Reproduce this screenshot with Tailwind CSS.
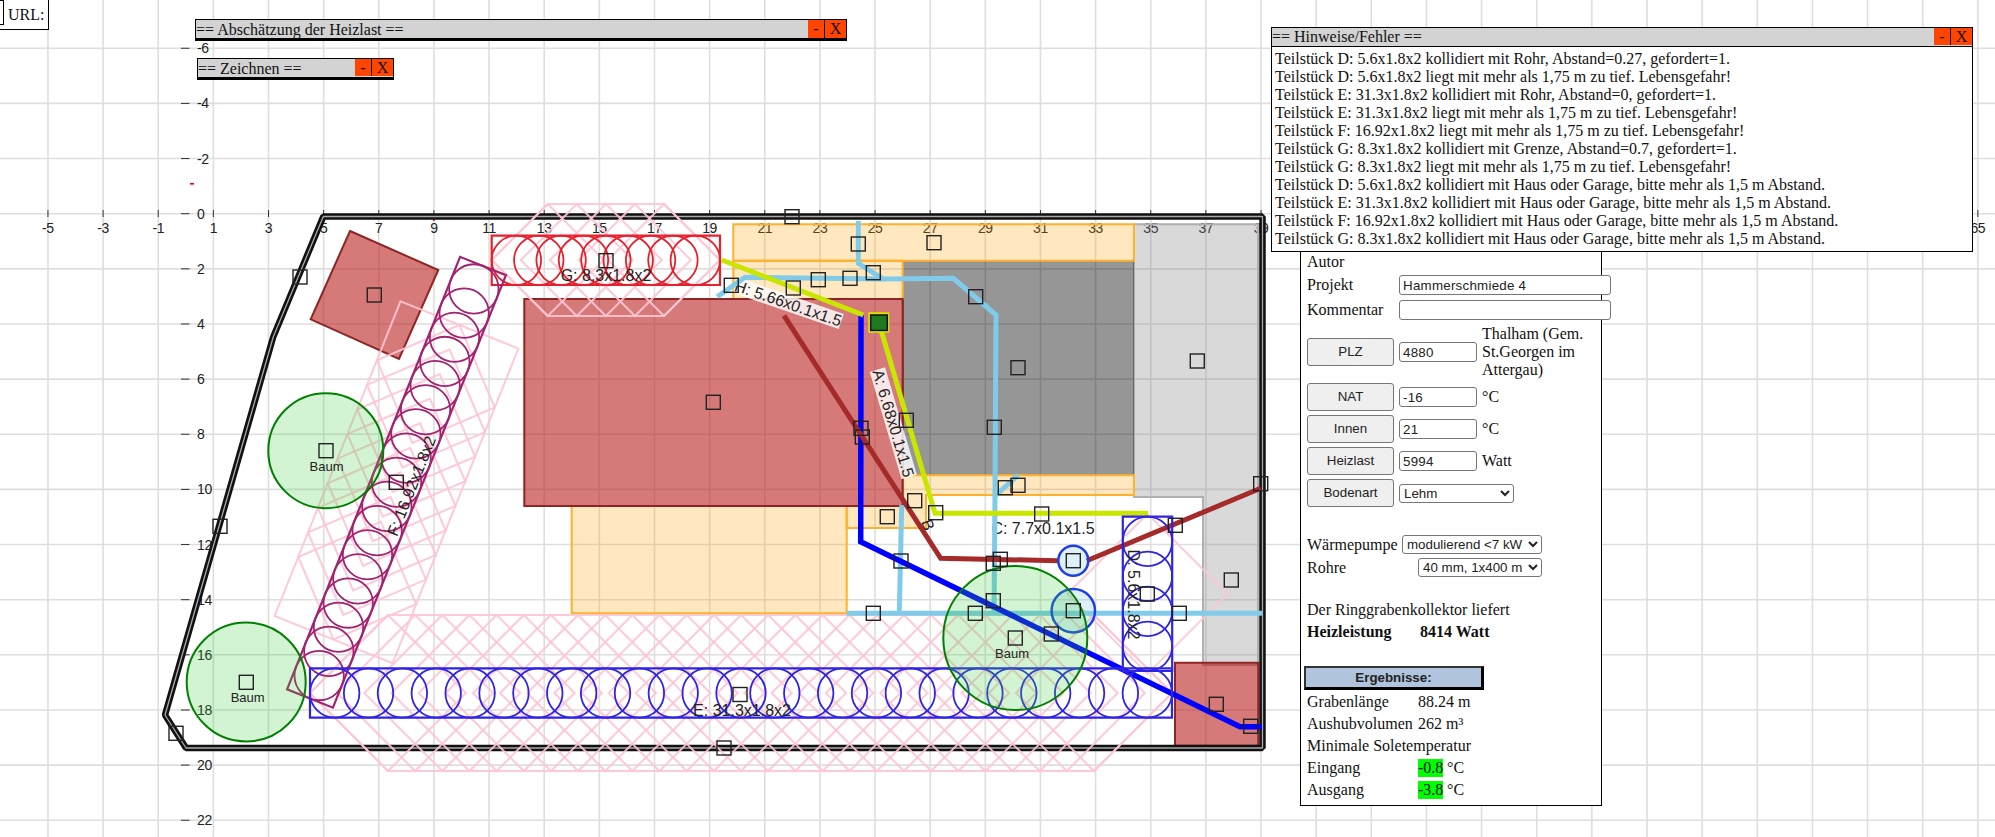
<!DOCTYPE html>
<html lang="de">
<head>
    <meta charset="UTF-8">
    <title>Ringgrabenkollektor</title>
    <script src="https://cdn.jsdelivr.net/npm/@tailwindcss/browser@4"></script>
</head>
<body class="bg-white">
<div class="relative w-[1995px] h-[837px] overflow-hidden bg-white font-['Liberation_Serif',serif] text-[16px] leading-[18px] text-[#111]">

    <!-- Plan -->
    <svg id="plan" class="absolute left-0 top-0" width="1995" height="837" font-family="'Liberation Sans', Arial, sans-serif"></svg>

    <!-- URL box -->
    <div class="absolute left-0 top-[-1px] w-[49px] h-[31px] bg-white border border-black border-l-0 flex items-start">
        <div class="w-[4px] h-[25px] border border-black border-l-0 shrink-0"></div>
        <span class="ml-[4px] mt-[6px]">URL:</span>
    </div>

    <!-- Heizlast window -->
    <div class="absolute left-[195px] top-[19px] w-[652px] h-[22px] bg-[#d3d3d3] border border-black border-b-[3px] flex">
        <span class="flex-1 whitespace-nowrap leading-[19px]">== Abschätzung der Heizlast ==</span>
        <span class="w-[17px] h-[18px] bg-[#ff4500] text-center border-r border-black">-</span>
        <span class="w-[21px] h-[18px] bg-[#ff4500] text-center">X</span>
    </div>

    <!-- Zeichnen window -->
    <div class="absolute left-[197px] top-[58px] w-[197px] h-[22px] bg-[#d3d3d3] border border-black border-b-[3px] flex">
        <span class="flex-1 whitespace-nowrap leading-[19px]">== Zeichnen ==</span>
        <span class="w-[17px] h-[17px] bg-[#ff4500] text-center border-r border-black">-</span>
        <span class="w-[21px] h-[17px] bg-[#ff4500] text-center">X</span>
    </div>

    <!-- Main panel -->
    <div class="absolute left-[1300px] top-[240px] w-[302px] h-[566px] bg-white border border-black pl-[6px] pt-[12px]">
        <div class="h-[18px]">Autor</div>
        <div class="flex items-center h-[20px] mt-[4px]">
            <span class="w-[92px] shrink-0">Projekt</span>
            <input value="Hammerschmiede 4" class="w-[212px] h-[20px] shrink-0 bg-white border border-[#767676] rounded-[3px] px-[3px] font-['Liberation_Sans',sans-serif] text-[13.33px] tracking-[0.25px] text-[#222]">
        </div>
        <div class="flex items-center h-[20px] mt-[5px]">
            <span class="w-[92px] shrink-0">Kommentar</span>
            <input value="" class="w-[212px] h-[20px] shrink-0 bg-white border border-[#767676] rounded-[3px] px-[3px]">
        </div>
        <div class="flex items-center h-[54px] mt-[5px]">
            <button class="w-[87px] h-[28px] mr-[5px] shrink-0 bg-[#efefef] border border-[#767676] rounded-[3px] font-['Liberation_Sans',sans-serif] text-[13.33px] text-[#222]">PLZ</button>
            <input value="4880" class="w-[78px] h-[20px] shrink-0 bg-white border border-[#767676] rounded-[3px] px-[3px] font-['Liberation_Sans',sans-serif] text-[13.33px] tracking-[0.25px] text-[#222]">
            <span class="ml-[5px] w-[110px]">Thalham (Gem. St.Georgen im Attergau)</span>
        </div>
        <div class="flex items-center h-[28px] mt-[4px]">
            <button class="w-[87px] h-[28px] mr-[5px] shrink-0 bg-[#efefef] border border-[#767676] rounded-[3px] font-['Liberation_Sans',sans-serif] text-[13.33px] text-[#222]">NAT</button>
            <input value="-16" class="w-[78px] h-[20px] shrink-0 bg-white border border-[#767676] rounded-[3px] px-[3px] font-['Liberation_Sans',sans-serif] text-[13.33px] tracking-[0.25px] text-[#222]">
            <span class="ml-[5px]">°C</span>
        </div>
        <div class="flex items-center h-[28px] mt-[4px]">
            <button class="w-[87px] h-[28px] mr-[5px] shrink-0 bg-[#efefef] border border-[#767676] rounded-[3px] font-['Liberation_Sans',sans-serif] text-[13.33px] text-[#222]">Innen</button>
            <input value="21" class="w-[78px] h-[20px] shrink-0 bg-white border border-[#767676] rounded-[3px] px-[3px] font-['Liberation_Sans',sans-serif] text-[13.33px] tracking-[0.25px] text-[#222]">
            <span class="ml-[5px]">°C</span>
        </div>
        <div class="flex items-center h-[28px] mt-[4px]">
            <button class="w-[87px] h-[28px] mr-[5px] shrink-0 bg-[#efefef] border border-[#767676] rounded-[3px] font-['Liberation_Sans',sans-serif] text-[13.33px] text-[#222]">Heizlast</button>
            <input value="5994" class="w-[78px] h-[20px] shrink-0 bg-white border border-[#767676] rounded-[3px] px-[3px] font-['Liberation_Sans',sans-serif] text-[13.33px] tracking-[0.25px] text-[#222]">
            <span class="ml-[5px]">Watt</span>
        </div>
        <div class="flex items-center h-[28px] mt-[4px]">
            <button class="w-[87px] h-[28px] mr-[5px] shrink-0 bg-[#efefef] border border-[#767676] rounded-[3px] font-['Liberation_Sans',sans-serif] text-[13.33px] text-[#222]">Bodenart</button>
            <select class="w-[115px] h-[19px] shrink-0 bg-white border border-[#767676] rounded-[3px] font-['Liberation_Sans',sans-serif] text-[13.33px] text-[#222]"><option>Lehm</option></select>
        </div>
        <div class="flex items-center h-[19px] mt-[28px]">
            <span class="w-[95px] shrink-0">Wärmepumpe</span>
            <select class="w-[140px] h-[19px] shrink-0 bg-white border border-[#767676] rounded-[3px] font-['Liberation_Sans',sans-serif] text-[13.33px] text-[#222]"><option>modulierend &lt;7 kW</option></select>
        </div>
        <div class="flex items-center h-[19px] mt-[4px]">
            <span class="w-[111px] shrink-0">Rohre</span>
            <select class="w-[124px] h-[19px] shrink-0 bg-white border border-[#767676] rounded-[3px] font-['Liberation_Sans',sans-serif] text-[13.33px] text-[#222]"><option>40 mm, 1x400 m</option></select>
        </div>
        <div class="h-[18px] mt-[24px]">Der Ringgrabenkollektor liefert</div>
        <div class="flex h-[18px] mt-[4px] font-bold">
            <span class="w-[113px] shrink-0">Heizleistung</span>
            <span>8414 Watt</span>
        </div>
        <div class="w-[180px] h-[24px] mt-[25px] ml-[-3px] bg-[#b0c4de] border-2 border-[#333] border-r-[3px] border-b-[3px] border-r-black border-b-black flex items-center justify-center font-['Liberation_Sans',sans-serif] text-[13.33px] font-bold text-[#222]">Ergebnisse:</div>
        <div class="flex h-[18px] mt-[3px]">
            <span class="w-[111px] shrink-0">Grabenlänge</span><span>88.24 m</span>
        </div>
        <div class="flex h-[18px] mt-[4px]">
            <span class="w-[111px] shrink-0">Aushubvolumen</span><span>262 m³</span>
        </div>
        <div class="h-[18px] mt-[4px]">Minimale Soletemperatur</div>
        <div class="flex h-[18px] mt-[4px]">
            <span class="w-[111px] shrink-0">Eingang</span><span class="bg-[#00ff00] w-[25px]">-0.8</span><span class="ml-[4px]">°C</span>
        </div>
        <div class="flex h-[18px] mt-[4px]">
            <span class="w-[111px] shrink-0">Ausgang</span><span class="bg-[#00ff00] w-[25px]">-3.8</span><span class="ml-[4px]">°C</span>
        </div>
    </div>

    <!-- Hinweise window -->
    <div class="absolute left-[1271px] top-[27px] w-[702px] h-[225px] bg-white border border-black">
        <div class="flex h-[19px] bg-[#d3d3d3] border-b border-black">
            <span class="flex-1 leading-[18px]">== Hinweise/Fehler ==</span>
            <span class="w-[17px] h-[17px] bg-[#ff4500] text-center border-r border-black">-</span>
            <span class="w-[21px] h-[17px] bg-[#ff4500] text-center">X</span>
        </div>
        <div class="pl-[3px] pt-[3px] whitespace-nowrap">
            <div>Teilstück D: 5.6x1.8x2 kollidiert mit Rohr, Abstand=0.27, gefordert=1.</div>
            <div>Teilstück D: 5.6x1.8x2 liegt mit mehr als 1,75 m zu tief. Lebensgefahr!</div>
            <div>Teilstück E: 31.3x1.8x2 kollidiert mit Rohr, Abstand=0, gefordert=1.</div>
            <div>Teilstück E: 31.3x1.8x2 liegt mit mehr als 1,75 m zu tief. Lebensgefahr!</div>
            <div>Teilstück F: 16.92x1.8x2 liegt mit mehr als 1,75 m zu tief. Lebensgefahr!</div>
            <div>Teilstück G: 8.3x1.8x2 kollidiert mit Grenze, Abstand=0.7, gefordert=1.</div>
            <div>Teilstück G: 8.3x1.8x2 liegt mit mehr als 1,75 m zu tief. Lebensgefahr!</div>
            <div>Teilstück D: 5.6x1.8x2 kollidiert mit Haus oder Garage, bitte mehr als 1,5 m Abstand.</div>
            <div>Teilstück E: 31.3x1.8x2 kollidiert mit Haus oder Garage, bitte mehr als 1,5 m Abstand.</div>
            <div>Teilstück F: 16.92x1.8x2 kollidiert mit Haus oder Garage, bitte mehr als 1,5 m Abstand.</div>
            <div>Teilstück G: 8.3x1.8x2 kollidiert mit Haus oder Garage, bitte mehr als 1,5 m Abstand.</div>
        </div>
    </div>
</div>

<script>
    // plan geometry in screen pixels, one metre = 27.57 px
    const M = 27.57, X0 = 185.8, Y0 = 213.7;
    let out = '';

    const poly = (pts, attrs) => { out += `<polygon points="${pts.map(p => p.join(',')).join(' ')}" ${attrs}/>`; };
    const line = (pts, attrs) => { out += `<polyline fill="none" points="${pts.map(p => p.join(',')).join(' ')}" ${attrs}/>`; };
    const circle = (x, y, r, attrs) => { out += `<circle cx="${x}" cy="${y}" r="${r}" ${attrs}/>`; };
    const text = (x, y, s, attrs = '') => { out += `<text x="${x}" y="${y}" dominant-baseline="central" ${attrs}>${s}</text>`; };
    const label = (x, y, rot, s, bgW) => {
        out += `<g transform="translate(${x} ${y}) rotate(${rot})">`;
        if (bgW) out += `<rect x="${-bgW / 2}" y="-8" width="${bgW}" height="16" fill="#fff" fill-opacity="0.82"/>`;
        out += `<text text-anchor="middle" dominant-baseline="central" font-size="16" fill="#222">${s}</text></g>`;
    };

    // grid
    for (let u = -5; u <= 65; u += 2) {
        const x = X0 + u * M;
        out += `<line x1="${x}" x2="${x}" y1="0" y2="837" stroke="#dedede" stroke-width="1.6"/>`;
    }
    for (let v = -6; v <= 22; v += 2) {
        const y = Y0 + v * M;
        out += `<line x1="0" x2="1995" y1="${y}" y2="${y}" stroke="#dedede" stroke-width="1.6"/>`;
    }
    const axisFont = 'font-size="14" letter-spacing="-0.4" fill="#222"';
    for (let u = -5; u <= 65; u += 2) {
        const x = X0 + u * M;
        out += `<line x1="${x}" x2="${x}" y1="210" y2="217" stroke="#333"/>`;
        // 41..63 lie behind the Hinweise window
        if (u < 41 || u > 63) text(x, 228, u, `text-anchor="middle" ${axisFont}`);
    }
    for (let v = -6; v <= 22; v += 2) {
        const y = Y0 + v * M;
        out += `<line x1="181" x2="189.5" y1="${y}" y2="${y}" stroke="#333"/>`;
        text(197, y, v, axisFont);
    }
    out += '<rect x="190" y="183" width="4" height="1.6" fill="#f00"/><rect x="433" y="218" width="1.6" height="3" fill="#f00"/>';

    // areas
    const gray = 'fill="#808080" fill-opacity="0.3" stroke="#b0b0b0" stroke-width="2"';
    poly([[1134, 224.3], [1258, 224.3], [1258, 665], [1203, 665], [1203, 497], [1134, 497]], gray);
    poly([[902.7, 260.7], [1134, 260.7], [1134, 475.3], [902.7, 475.3]], 'fill="#000" fill-opacity="0.41"');
    out += '<line x1="902.7" x2="902.7" y1="299" y2="475" stroke="#222" stroke-width="1.5"/>';
    const orange = 'fill="#ffa500" fill-opacity="0.25" stroke="#ffb02e" stroke-width="2"';
    poly([[733.3, 224.3], [1134, 224.3], [1134, 260.7], [733.3, 260.7]], orange);
    poly([[733.3, 260.7], [902.7, 260.7], [902.7, 299], [733.3, 299]], orange);
    poly([[846.7, 506], [902.7, 506], [902.7, 475.3], [1134, 475.3], [1134, 495], [926, 495], [926, 528], [846.7, 528]], orange);
    poly([[571.7, 506], [846.7, 506], [846.7, 613.3], [571.7, 613.3]], orange);

    // houses
    const house = 'fill="#b92020" fill-opacity="0.6" stroke="#8f2424" stroke-width="2"';
    poly([[524.3, 299], [902.7, 299], [902.7, 506], [524.3, 506]], house);
    poly([[350, 231], [438.3, 270], [399, 359], [310.7, 319.3]], house);
    poly([[1175, 662.7], [1258.3, 662.7], [1258.3, 745.7], [1175, 745.7]], house);

    // boundary, black with a lighter core
    const border = [[323.3, 216.5], [1262.5, 216.5], [1262.5, 748], [186, 748], [165, 715], [273.3, 336.7]];
    poly(border, 'fill="none" stroke="#111" stroke-width="6.5" stroke-linejoin="bevel"');
    poly(border, 'fill="none" stroke="#aaa" stroke-width="1.3" stroke-linejoin="bevel"');

    // pink safety hatch of a trench: one diamond per metre plus the outline
    function hatch(ax, ay, bx, by, h, capped) {
        const L = Math.hypot(bx - ax, by - ay), ux = (bx - ax) / L, uy = (by - ay) / L, nx = -uy, ny = ux;
        const at = (s, t) => [ax + ux * s + nx * t, ay + uy * s + ny * t];
        const st = 'fill="none" stroke="#ffc4d3" stroke-opacity="0.9" stroke-width="2"';
        const start = capped ? 2 * h : h;
        const span = L - 2 * start;
        const n = Math.max(Math.round(span / M), 0);
        for (let k = 0; k <= n; k++) {
            const c = n ? start + k * span / n : L / 2;
            poly([at(c - h, 0), at(c, h), at(c + h, 0), at(c, -h)], st);
        }
        if (capped) poly([at(h, h), at(L - h, h), at(L - h, -h), at(h, -h)], st);
        else if (n) poly([at(0, 0), at(h, h), at(L - h, h), at(L, 0), at(L - h, -h), at(h, -h)], st);
    }
    hatch(491.7, 260, 720, 260, 56);
    hatch(483, 266, 310, 698.5, 63.5, true);
    hatch(310, 693, 1172, 693, 78);
    hatch(1147.5, 516.7, 1147.5, 671, 80);

    // labels of the pipes sit under the pipes
    label(788.3, 303.3, 19, 'H: 5.66x0.1x1.5', 112);
    label(893.3, 423.3, 73.5, 'A: 6.68x0.1x1.5', 112);
    label(1043, 528, 0, 'C: 7.7x0.1x1.5');
    label(928, 525, 70, 'B');

    // pipes
    const sky = 'stroke="#7fcbe9" stroke-width="5"';
    line([[846.7, 613.3], [1262, 613.3]], sky);
    line([[899.3, 613.3], [901.7, 505]], sky);
    line([[994, 613], [995, 493]], sky);
    line([[994, 497], [1018, 475]], sky);
    line([[995, 493], [996, 315], [953.3, 278.3], [883.3, 279], [858.3, 263.3], [858.3, 221]], sky);
    line([[883.3, 279], [745, 277.3], [717.3, 296.7]], sky);
    line([[861, 315], [860.7, 541.7], [1240, 726.7], [1262, 726.7]], 'stroke="#0000ff" stroke-width="5.5"');
    const brown = 'stroke="#a52a2a" stroke-width="5"';
    line([[784, 315.7], [940.7, 558.3], [1058.3, 560.7]], brown);
    line([[1086.7, 560.7], [1260.7, 488.3]], brown);
    const lime = 'stroke="#c8e600" stroke-width="5"';
    line([[721.7, 260], [863.3, 315]], lime);
    line([[879, 323], [935, 513.3], [1148, 513.3]], lime);

    // trenches
    function trench(ax, ay, bx, by, n, col) {
        const L = Math.hypot(bx - ax, by - ay), ux = (bx - ax) / L, uy = (by - ay) / L, nx = -uy, ny = ux, w = 24.7;
        poly([[ax + nx * w, ay + ny * w], [bx + nx * w, by + ny * w], [bx - nx * w, by - ny * w], [ax - nx * w, ay - ny * w]], `fill="none" stroke="${col}" stroke-width="2.2"`);
        for (let k = 0; k < n; k++) {
            const s = w + k * (L - 2 * w) / (n - 1);
            circle(ax + ux * s, ay + uy * s, w, `fill="none" stroke="${col}" stroke-width="1.8"`);
        }
    }
    trench(491.7, 260.3, 720, 260.3, 9, '#e6202c');
    trench(483, 266, 310, 698.5, 17, '#a3226e');
    trench(1147.5, 516.7, 1147.5, 671, 4, '#2f24e6');
    trench(310, 693, 1172, 693, 25, '#2f24e6');

    // wells
    circle(1073.3, 560.7, 15, 'fill="#87ceeb" fill-opacity="0.28" stroke="#1f3fe0" stroke-width="2.5"');
    circle(1073.3, 610.7, 21.7, 'fill="#87ceeb" fill-opacity="0.28" stroke="#1f3fe0" stroke-width="2.5"');

    // trees
    const tree = 'fill="#32cd32" fill-opacity="0.22" stroke="#008000" stroke-width="2"';
    circle(325.8, 450.7, 57.5, tree);
    circle(246.2, 682, 59.5, tree);
    circle(1015.3, 638, 72, tree);

    // trench labels
    label(606, 275.7, 0, 'G: 8.3x1.8x2');
    label(742, 710, 0, 'E: 31.3x1.8x2');
    label(411.5, 486, -68.2, 'F: 16.92x1.8x2');
    label(1133, 594.5, 90, 'D: 5.6x1.8x2');
    for (const [x, y] of [[326.5, 466.7], [247.7, 697.7], [1012, 653.3]])
        text(x, y, 'Baum', 'text-anchor="middle" font-size="13" fill="#222"');

    // start point of the pipes
    out += '<rect x="868.3" y="312.3" width="21" height="20.4" fill="#d6e600"/><rect x="870.7" y="315" width="16.6" height="15.4" fill="#1f7a1f" stroke="#111" stroke-width="1.5"/>';

    // drag handles
    const handles = [[606, 260.7], [731.3, 285.3], [792, 216.7], [793.3, 288], [818.3, 279.7], [850, 278.3], [858.3, 244], [873.3, 272.7],
        [934, 242.7], [975.7, 296.7], [713.3, 402.3], [861, 428.3], [862.3, 437], [906.3, 420.3], [1018, 367.7], [994.3, 427.3],
        [1005.3, 487.7], [1018, 485.3], [1197.3, 361], [1260.7, 483.7], [914.7, 500.7], [887.3, 516.7], [935.7, 512.7], [1041.7, 514],
        [1175.3, 525.3], [1231.3, 580], [1000.3, 559.3], [993.3, 563.3], [901, 561], [1073.3, 560.7], [1073.3, 610.7], [993.3, 600.7],
        [975.3, 613.3], [873.3, 613.3], [1051.3, 634], [1147.3, 594], [1179.3, 613.3], [1216.3, 704.3], [1250.7, 726.3], [300, 277],
        [374.3, 295], [396.3, 482.3], [220, 526.3], [176, 733.3], [724, 748], [740, 694.5], [326, 450.7], [246.3, 682.3], [1015.3, 638]];
    for (const [x, y] of handles)
        out += `<rect x="${x - 7}" y="${y - 7}" width="14" height="14" fill="none" stroke="#222" stroke-width="1.4"/>`;

    document.getElementById('plan').innerHTML = out;
</script>
</body>
</html>
